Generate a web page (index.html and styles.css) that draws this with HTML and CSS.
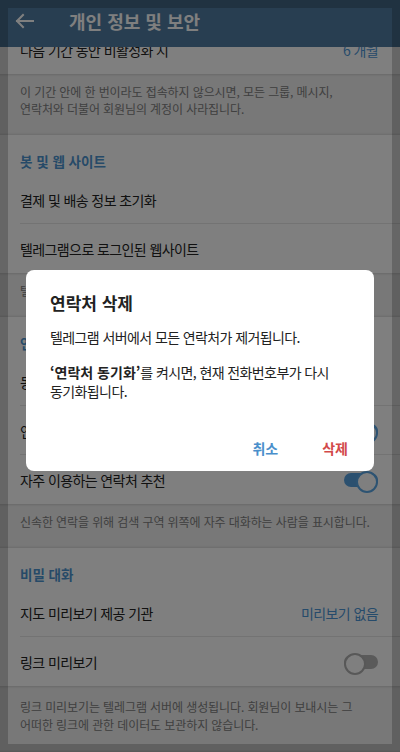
FILE: index.html
```html
<!DOCTYPE html>
<html lang="ko">
<head>
  <meta charset="UTF-8">
  <title>개인 정보 및 보안</title>
  <link rel="stylesheet" href="styles.css">
</head>
<body>

  <header class="appbar">
    <svg class="back" viewBox="0 0 24 24" width="24" height="24">
      <path d="M4 12H20M10 6L4 12L10 18" fill="none" stroke="#fff" stroke-width="2" stroke-linecap="square"/>
    </svg>
    <h1>개인 정보 및 보안</h1>
  </header>

  <div class="list">

    <div class="section">
      <div class="row"><span>다음 기간 동안 비활성화 시</span><span class="value">6 개월</span></div>
    </div>
    <p class="info">이 기간 안에 한 번이라도 접속하지 않으시면, 모든 그룹, 메시지,<br>연락처와 더불어 회원님의 계정이 사라집니다.</p>

    <!-- bots -->
    <div class="section">
      <div class="section-title">봇 및 웹 사이트</div>
      <div class="row"><span>결제 및 배송 정보 초기화</span></div>
      <div class="row"><span>텔레그램으로 로그인된 웹사이트</span></div>
    </div>
    <p class="info">텔레그램으로 로그인한 웹사이트를 관리합니다.</p>

    <!-- contacts -->
    <div class="section">
      <div class="section-title">연락처</div>
      <div class="row"><span>동기화된 연락처 삭제</span></div>
      <div class="row"><span>연락처 동기화</span><span class="switch on"></span></div>
      <div class="row"><span>자주 이용하는 연락처 추천</span><span class="switch on"></span></div>
    </div>
    <p class="info">신속한 연락을 위해 검색 구역 위쪽에 자주 대화하는 사람을 표시합니다.</p>

    <!-- secret chats -->
    <div class="section">
      <div class="section-title">비밀 대화</div>
      <div class="row"><span>지도 미리보기 제공 기관</span><span class="value">미리보기 없음</span></div>
      <div class="row"><span>링크 미리보기</span><span class="switch"></span></div>
    </div>
    <p class="info last">링크 미리보기는 텔레그램 서버에 생성됩니다. 회원님이 보내시는 그<br>어떠한 링크에 관한 데이터도 보관하지 않습니다.</p>

  </div>

  <div class="bezel"></div>

  <div class="dim">
    <div class="dialog">
      <h2>연락처 삭제</h2>
      <p>텔레그램 서버에서 모든 연락처가 제거됩니다.</p>
      <p><b>‘연락처 동기화’</b>를 켜시면, 현재 전화번호부가 다시 동기화됩니다.</p>
      <div class="actions">
        <button class="cancel">취소</button>
        <button class="delete">삭제</button>
      </div>
    </div>
  </div>

</body>
</html>
```

FILE: styles.css
```css
* {
  box-sizing: border-box;
}
html, body {
  margin: 0;
  height: 100%;
}
body {
  font-family: "Noto Sans CJK KR", "Noto Sans", sans-serif;
  background: #f0f0f0;
  color: #222;
  overflow: hidden;
  word-break: keep-all;
}

/* top bar */
.appbar {
  position: relative;
  z-index: 1;
  height: 47px;
  display: flex;
  align-items: center;
  padding: 0 0 5px 13px;
  background: #517da2;
  color: #fff;
}
.back {
  flex: none;
}
.appbar h1 {
  margin: 0 0 0 32px;
  font-size: 18px;
  font-weight: 700;
}

/* settings list, scrolled a little */
.list {
  margin-top: -22px;
}
.section {
  background: #fff;
}
.section-title {
  height: 40px;
  padding: 16px 20px 0;
  font-size: 13.5px;
  line-height: 20px;
  font-weight: 700;
  color: #4d94d0;
}
.row {
  position: relative;
  height: 49px;
  display: flex;
  align-items: center;
  justify-content: space-between;
  padding: 0 22px 0 20px;
  font-size: 14px;
  line-height: 20px;
  letter-spacing: -0.6px;
  color: #222;
}
.row:not(:last-child)::after {
  content: "";
  position: absolute;
  left: 20px;
  right: 0;
  bottom: 0;
  height: 1px;
  background: #e6e6e6;
}
.value {
  color: #4d96d6;
}
.info {
  margin: 0;
  padding: 9px 18px 18px 20px;
  font-size: 12px;
  line-height: 17px;
  letter-spacing: -0.1px;
  color: #808080;
  background: #f0f0f0;
  box-shadow: inset 0 3px 3px -3px rgba(0,0,0,0.25), inset 0 -3px 3px -3px rgba(0,0,0,0.2);
}
.info.last {
  padding-top: 12px;
  line-height: 18px;
}

/* toggle */
.switch {
  position: relative;
  flex: none;
  width: 34px;
  height: 18px;
}
.switch::before {
  content: "";
  position: absolute;
  left: 0;
  right: 0;
  top: 2px;
  height: 14px;
  border-radius: 7px;
  background: #b4b4b4;
}
.switch::after {
  content: "";
  position: absolute;
  top: 0;
  left: 0;
  width: 18px;
  height: 18px;
  border-radius: 50%;
  background: #fff;
  border: 2px solid #b0b0b0;
}
.switch.on::before {
  background: #56a0de;
}
.switch.on::after {
  left: auto;
  right: 0;
  border-color: #5aa6e4;
}

/* darker edge around the screen */
.bezel {
  position: fixed;
  z-index: 5;
  top: 0;
  left: 0;
  width: 100%;
  height: 100%;
  border: 8px solid rgba(0,0,0,0.2);
  pointer-events: none;
}

/* modal */
.dim {
  position: fixed;
  z-index: 10;
  top: 0;
  left: 0;
  width: 100%;
  height: 100%;
  display: flex;
  align-items: center;
  justify-content: center;
  padding-bottom: 11px;
  background: rgba(0,0,0,0.5);
}
.dialog {
  width: 348px;
  padding: 21px 14px 5px 24px;
  background: #fff;
  border-radius: 8px;
}
.dialog h2 {
  margin: 0;
  font-size: 17px;
  line-height: 24px;
  font-weight: 700;
  color: #222;
}
.dialog p {
  margin: 13px 4px 0 0;
  font-size: 14px;
  line-height: 19px;
  letter-spacing: -0.6px;
  color: #222;
}
.dialog p + p {
  margin-top: 16px;
}
.dialog b {
  letter-spacing: 0;
}
.actions {
  display: flex;
  justify-content: flex-end;
  gap: 20px;
  margin-top: 29px;
}
.actions button {
  height: 36px;
  padding: 0 12px;
  border: none;
  background: none;
  font-family: inherit;
  font-size: 14px;
  font-weight: 700;
  cursor: pointer;
}
.cancel {
  color: #4a8fcb;
}
.delete {
  color: #d24949;
}
```
